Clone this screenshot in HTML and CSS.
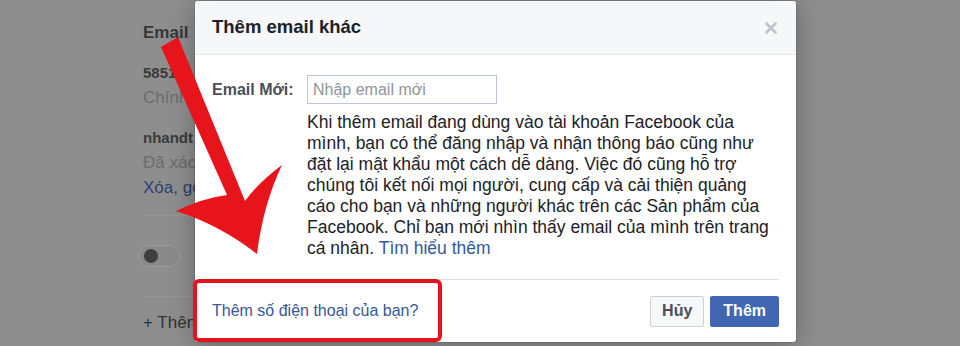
FILE: index.html
```html
<!DOCTYPE html>
<html lang="vi">
<head>
  <meta charset="UTF-8">
  <meta name="viewport" content="width=device-width, initial-scale=1.0">
  <title>Thêm email khác</title>
  <link rel="stylesheet" href="styles.css">
</head>
<body>
  <div class="settings">
    <h3 class="settings-title">Email</h3>
    <div class="email-item">
      <div class="email-addr">5851</div>
      <div class="email-note">Chính</div>
    </div>
    <div class="email-item">
      <div class="email-addr">nhandt</div>
      <div class="email-note">Đã xác</div>
      <div class="email-actions">Xóa, gỡ</div>
    </div>
    <div class="toggle-row">
      <span class="toggle"><span class="knob"></span></span>
    </div>
    <div class="add-row">+ Thêm</div>
  </div>

  <div class="dialog">
    <div class="dialog-header">
      <span class="dialog-title">Thêm email khác</span>
      <svg class="close" width="12" height="12" viewBox="0 0 12 12">
        <path d="M1.5 1.5 L10.5 10.5 M10.5 1.5 L1.5 10.5" stroke="#bec2c9" stroke-width="2.6" stroke-linecap="round"/>
      </svg>
    </div>
    <div class="dialog-body">
      <div class="field-row">
        <label class="field-label">Email Mới:</label>
        <div class="field">
          <input class="email-input" type="text" placeholder="Nhập email mới">
          <p class="help-text">Khi thêm email đang dùng vào tài khoản Facebook của<br>mình, bạn có thể đăng nhập và nhận thông báo cũng như<br>đặt lại mật khẩu một cách dễ dàng. Việc đó cũng hỗ trợ<br>chúng tôi kết nối mọi người, cung cấp và cải thiện quảng<br>cáo cho bạn và những người khác trên các Sản phẩm của<br>Facebook. Chỉ bạn mới nhìn thấy email của mình trên trang<br>cá nhân. <a href="#">Tìm hiểu thêm</a></p>
        </div>
      </div>
    </div>
    <div class="dialog-footer">
      <a href="#" class="phone-link">Thêm số điện thoại của bạn?</a>
      <div class="buttons">
        <button class="btn">Hủy</button>
        <button class="btn btn-primary">Thêm</button>
      </div>
    </div>
  </div>

  <!-- chu thich mau do -->
  <div class="highlight"></div>
  <svg class="arrow" width="960" height="346" viewBox="0 0 960 346">
    <path d="M161 47 L178 37 L245 201 Q259 182 282 165 Q263 205 257 254 Q220 225 176 211 Q203 198 227 195 Z" fill="#e8141c"/>
  </svg>
</body>
</html>
```

FILE: styles.css
```css
body {
  margin: 0;
  width: 960px;
  height: 346px;
  overflow: hidden;
  background: #8e8e8f;
  font-family: "Liberation Sans", Arial, sans-serif;
  position: relative;
}

/* trang phia sau (bi lam mo) */
.settings {
  margin-left: 143px;
  padding-top: 22px;
  width: 52px;
  white-space: nowrap;
}
.settings-title {
  margin: 0;
  font-size: 17px;
  line-height: 22px;
  color: #363637;
}
.email-item {
  margin-top: 16px;
  line-height: 25px;
}
.email-item + .email-item {
  margin-top: 15px;
}
.email-addr {
  font-size: 15px;
  font-weight: bold;
  color: #3a3a3b;
}
.email-note {
  font-size: 17px;
  color: #6b6b6c;
}
.email-actions {
  font-size: 17px;
  color: #2c4170;
}
.toggle-row {
  margin-top: 15px;
  border-top: 1px solid #979798;
  border-bottom: 1px solid #979798;
  padding: 29px 0 29px 0;
}
.toggle {
  display: block;
  width: 42px;
  height: 22px;
  margin-left: -5px;
  border-radius: 12px;
  background: #8a8a8b;
  border: 1px solid #9c9c9d;
  box-sizing: border-box;
  position: relative;
}
.knob {
  position: absolute;
  left: 5px;
  top: 3px;
  width: 14px;
  height: 14px;
  border-radius: 50%;
  background: #3f3f40;
}
.add-row {
  margin-top: 13px;
  font-size: 17px;
  line-height: 25px;
  color: #333334;
}

/* hop thoai */
.dialog {
  position: absolute;
  left: 195px;
  top: 1px;
  width: 601px;
  height: 341px;
  background: #fff;
  border-radius: 3px;
  box-shadow: 0 2px 26px rgba(0, 0, 0, 0.3), 0 0 0 1px rgba(0, 0, 0, 0.08);
  display: flex;
  flex-direction: column;
  overflow: hidden;
}
.dialog-header {
  height: 53px;
  background: #f6f7f9;
  border-bottom: 1px solid #e5e5e5;
  display: flex;
  align-items: center;
  justify-content: space-between;
  padding: 0 19px 0 17px;
}
.dialog-title {
  font-size: 18.5px;
  font-weight: bold;
  color: #1d2129;
  margin-top: -1px;
}
.close {
  display: block;
}
.dialog-body {
  padding: 20px 17px 0 17px;
  flex: 1;
}
.field-row {
  display: flex;
}
.field-label {
  width: 95px;
  flex-shrink: 0;
  font-size: 16px;
  font-weight: bold;
  color: #4b4f56;
  line-height: 29px;
}
.field {
  flex: 1;
}
.email-input {
  display: block;
  width: 190px;
  height: 29px;
  box-sizing: border-box;
  border: 1px solid #bdc7d8;
  padding: 0 5px;
  font-family: inherit;
  font-size: 16px;
  color: #1d2129;
  outline: none;
}
.email-input::placeholder {
  color: #90949c;
}
.help-text {
  margin: 8px 0 0 0;
  font-size: 17.5px;
  line-height: 21px;
  color: #1d2129;
  white-space: nowrap;
}
.help-text a {
  color: #365899;
  text-decoration: none;
}
.dialog-footer {
  margin: 0 17px;
  border-top: 1px solid #dddfe2;
  height: 62px;
  display: flex;
  align-items: center;
  justify-content: space-between;
}
.phone-link {
  font-size: 16px;
  color: #365899;
  text-decoration: none;
}
.buttons {
  display: flex;
  gap: 6px;
}
.btn {
  height: 31px;
  padding: 0 11px;
  border: 1px solid #ced0d4;
  border-radius: 2px;
  background: #f6f7f9;
  color: #4b4f56;
  font-family: inherit;
  font-size: 16px;
  font-weight: bold;
  cursor: pointer;
}
.btn-primary {
  background: #4267b2;
  border-color: #4267b2;
  color: #fff;
  padding: 0 12px;
}

/* danh dau mau do */
.highlight {
  position: absolute;
  left: 193px;
  top: 279px;
  width: 249px;
  height: 63px;
  box-sizing: border-box;
  border: 4px solid #e3141d;
  border-radius: 6px;
}
.arrow {
  position: absolute;
  left: 0;
  top: 0;
  pointer-events: none;
}
```
